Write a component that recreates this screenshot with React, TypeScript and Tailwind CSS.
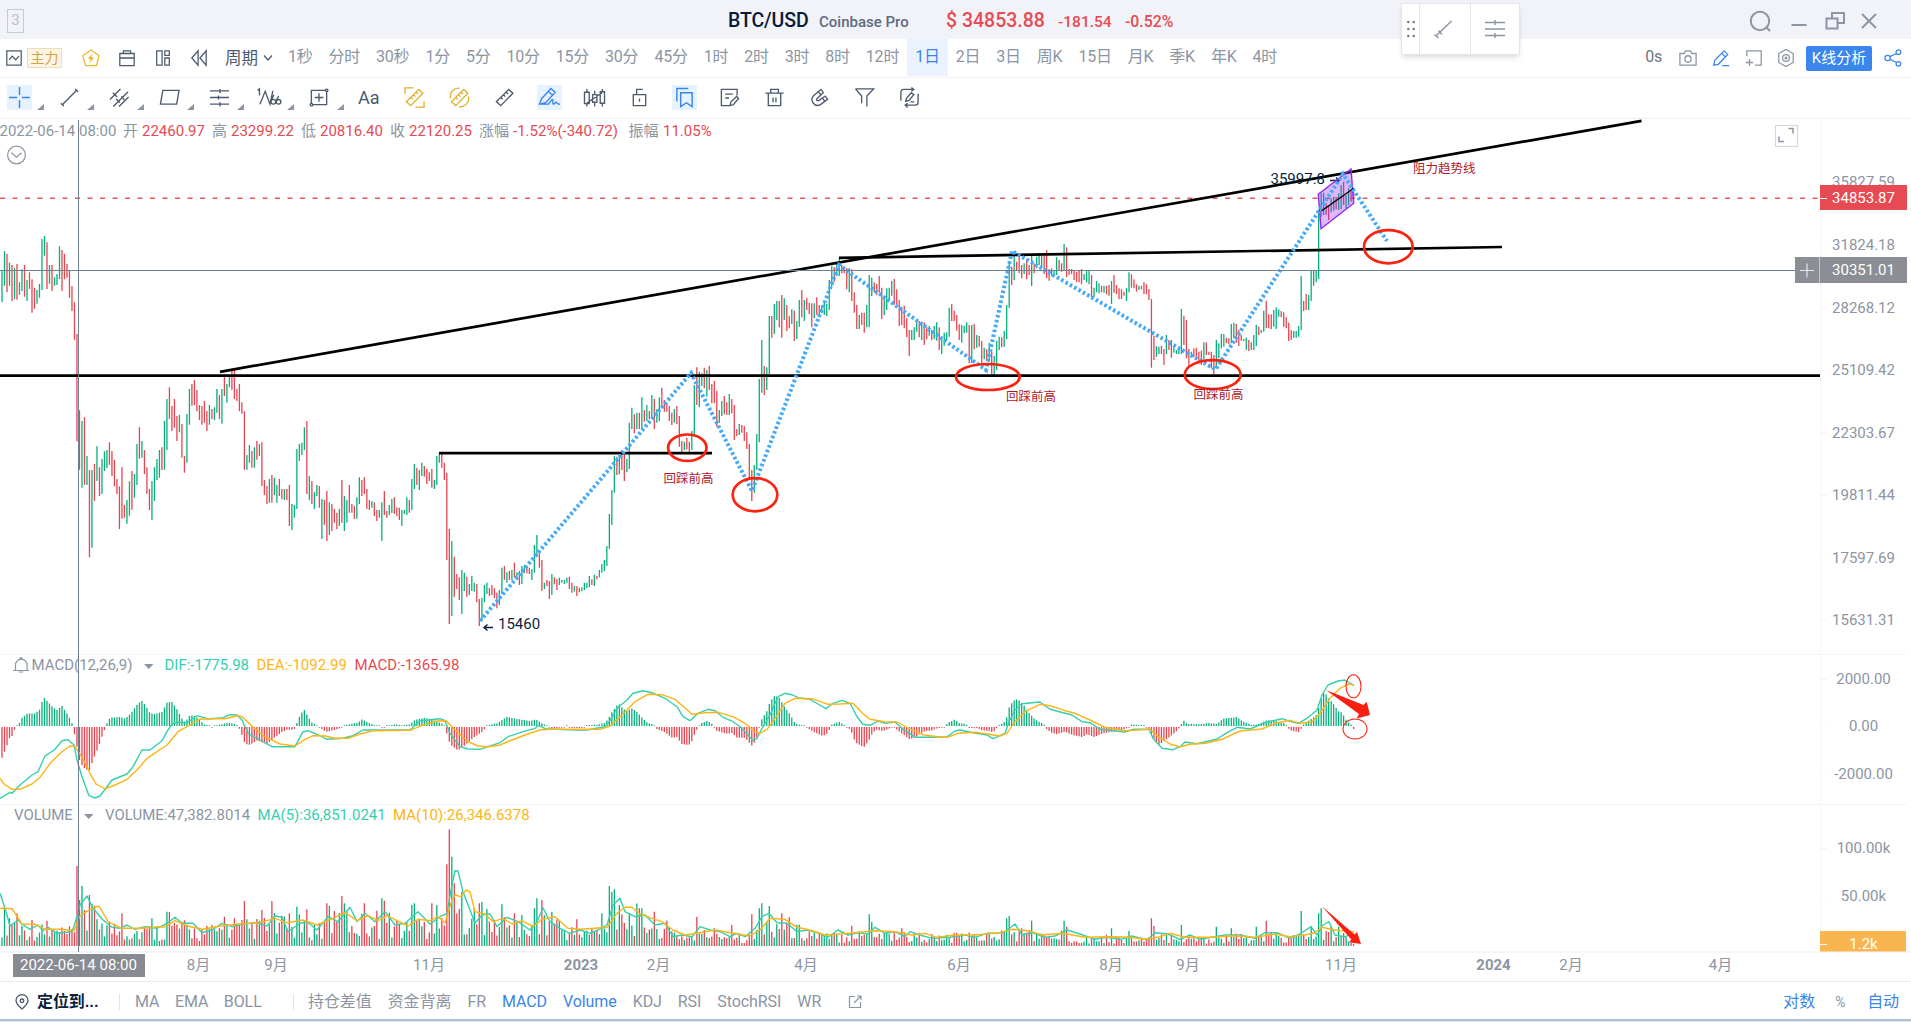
import React from "react";

const FONT = "Roboto, 'Noto Sans CJK SC', sans-serif";
const GREEN = "#06b07b";
const RED = "#e64550";

/* ---------- price data: "high-low" pixel pairs followed by direction ---------- */
const SEG_A =
  "152-247g 94-197g 102-217r 128-197g 135-243r 143-238g 132-239r 187-224g 148-213g 135-230r 180-243g 157-207r 178-278r 203-266r 210-251g 192-233g 57-210g 48-107g 67-207r 135-191g 135-213r 172-197g 162-195g 79-177g 90-213r 101-178r 132-173r 152-233r 198-273r 247-359r 342-664r 571-749r 603-803g 592-794r 708-795g 751-1012r 750-983g 732-843r 679-783g 742-828r 717-822g 694-753g 690-744g 667-735r 693-768r 720-799r 777-822r 799-927r 742-896r 855-893r 840-911g 784-887g 753-869r 762-833g 672-795g 622-716r 663-713g 690-762r 742-822r 807-870r 783-900g 742-843g 717-780g 690-773g 682-750r 603-749g 537-690g 502-597r 558-633r 537-623r 588-663r 585-637g 612-713r 708-758r 582-728g 507-614g 492-557r 480-555r 510-574r 555-600r 558-614r 543-608r 573-633r 555-614g 567-597r 562-600g 507-578g 525-597r 507-611g 462-528r 492-548g 468-502g 453-510r 450-537r 507-543r 492-574r 547-581r 574-749r 705-749g 675-728g 693-743r 682-743g 663-719r 672-708g 667-798r 780-825r 798-852r 777-848g 765-848r 773-825g 795-848g 777-828r 807-838r 807-840g 807-840r 795-918r 852-930g 855-893g 687-867g 672-723g 668-705g 622-690g 603-822r 768-840g 783-852r 817-867g 795-828g 798-863r 837-957g 840-914r 813-963r 847-945g 852-933r 867-908r 878-927r 867-918g 780-908r 828-933g 840-908g 795-878r 852-878r 857-897r 832-896g 772-852g 780-828r 772-822r 807-867r 840-870r 843-863g 847-888r 870-903r 870-893g 847-963g 813-885r 873-893r 855-885g 837-879g 832-882r 862-888r 863-900r 870-918g 870-882g 832-885g 840-878r 777-870g 732-807g 743-795r 750-810g 728-768g 738-770r 747-792r 757-783r 747-803r 780-807g 708-795g 700-728g 702-743r 728-780r 758-1020r 927-1212r 963-1188g 1010-1130r 1062-1107r 1072-1140r 1050-1182g 1058-1113g 1070-1130r 1092-1125g 1068-1113g 1088-1115g 1092-1147r 1137-1218r";
const SEG_B =
  "1073-1140g 1035-1087g 1028-1062g 1044-1068r 1035-1065r 1045-1075r 1058-1105r 1050-1095g 983-1062g 978-1020r 997-1028g 993-1020r 990-1020g 968-1012r 997-1018g 993-1035r 978-1032g 975-1000g 980-1000r 983-1002r 987-1020g 915-998g 885-950g 930-983r 960-1053r 1028-1047g 1020-1038r 1023-1077r 1002-1065g 1012-1033r 1018-1050r 1013-1035g 1020-1028g 1020-1032g 1013-1028g 1010-1047r 1028-1058r 1038-1055g 1038-1068r 1043-1057r 1042-1054g 1028-1050g 1028-1044g 1008-1042g 1018-1035r 1004-1038g 1008-1018r 990-1012g 972-998g 960-993g 918-978g 822-927g 750-855g 648-758g 650-705r 645-703g 630-690r 640-723r 657-697g 548-687g 503-567g 523-580r 518-567g 518-567r 472-570g 510-545r 495-543g 513-537r 465-535g 477-567r 508-548g 472-543g 443-505r 480-515r 490-515r 498-543r 518-555r 507-548g 498-552r 528-620r 603-636r 605-630g 593-628r 605-640r 573-630g 435-585g 382-495r 395-502g 400-438g 383-445r 390-470g 378-450r 432-490r 423-490r 453-560r 510-548g 483-528g 468-523r 487-525r 462-525g 477-520r 495-600r 567-588r 552-585g 555-578r 558-603r 577-627r 612-720r 690-783r 675-758g 582-690g 417-607g 300-458g 378-465r 382-450g 228-402g 228-293r 192-282g 183-240g 183-262r 165-293r 175-240g 195-273r 228-265r 208-252g 212-303r 243-297g 180-260g 150-232r 180-243g 173-210r 188-222r 190-262r 190-235g 172-225r 195-232r 200-220g 185-225g 192-228g 120-210g 78-140g 82-125r 72-108g 55-108g 75-100r 80-100r 85-148r 84-157g 88-183r 157-218r 195-267r 225-267g 218-255r 218-278r 195-262g 105-262g 113-168g 127-157r 132-165r 108-158r 143-237r 172-225g 145-210g 143-180g 123-167g 117-195r 148-192r 180-258r 202-255r 197-265r 235-292r 270-348r 270-300g 262-300g 243-275g 243-292r 247-300g 247-315r 262-298r 258-287g 270-300r 258-297g 247-302g 262-330r 297-342g 278-317g 277-300g 203-290g 192-243r 212-243r 225-272r 253-300r 255-308g 257-280g 247-278g 255-370r 255-368g 252-328r 285-323g 288-320r 303-368r 323-358g 328-360r 308-365g 335-403r 348-408g 303-390g 290-330g";
const SEG_C =
  "562-592r 543-590g 465-567g 335-473g 350-405r 303-390g 335-360r 318-370r 345-385r 340-372g 328-388r 345-375r 317-408g 340-370r 320-355g 310-345g 318-352g 317-372r 300-385r 357-392r 355-378g 360-378g 322-375g 330-362r 340-365r 282-362g 292-382r 357-375r 357-372r 360-390r 365-397r 360-397r 357-403r 372-390g 363-397g 363-403g 375-442r 413-440g 393-427g 400-430g 407-427r 407-428g 407-433r 405-437r 393-462g 375-428r 405-433r 415-448r 418-447r 425-437r 415-453g 367-427g 373-413r 388-415r 403-425r 407-420g 407-418r 397-433r 403-433r 417-450r 447-653r 557-630r 588-620g 590-612g 587-612r 597-645r 555-612g 570-600r 570-623r 592-608g 600-612g 597-612g 477-612g 497-585r 510-625r 597-648r 605-622g 595-622r 593-625r 605-640r 602-645r 577-628g 577-615r 605-615r 605-655r 615-672r 570-655g 580-625g 552-595g 552-590g 563-580r 565-583r 522-580g 518-565g 522-578r 540-588r 555-572r 567-573g 563-600g 570-603r 577-600g 555-600g 525-588g 530-555r 540-550g 482-545g 453-535r 493-535r 493-537r 480-530g 472-537g 478-500g 483-502r 487-530r 502-535r 518-573r 540-570r 543-563g 543-563g 528-560g 378-540g 453-483r 432-480r 435-480g 363-453g 363-407g 363-397g 180-387g 130-200g 128-195g 160-195r 165-210r 145-187g 140-182g 140-178r 130-180g 105-178g 95-165r 135-175g 115-165g 120-155r 125-145r";

type Bar = { x: number; hi: number; lo: number; up: boolean };

function segment(src: string, x0: number, x1: number, y0: number): Bar[] {
  const items = src.split(" ");
  return items.map((s, k) => {
    const [a, b] = s.slice(0, -1).split("-").map(Number);
    return {
      x: x0 + ((x1 - x0) * k) / (items.length - 1),
      hi: y0 + a / 3,
      lo: y0 + b / 3,
      up: s.endsWith("g"),
    };
  });
}

const BARS: Bar[] = [
  ...segment(SEG_A, 2, 479.3, 220),
  ...segment(SEG_B, 481.9, 999.2, 240),
  ...segment(SEG_C, 1001.7, 1353.6, 150),
];

const nums = (s: string) => s.trim().split(/[\s,]+/).map(Number);
function frames(s: string): [number, number][] {
  const n = nums(s);
  const out: [number, number][] = [];
  for (let i = 0; i < n.length; i += 2) out.push([n[i], n[i + 1]]);
  return out;
}
function at(f: [number, number][], x: number) {
  if (x <= f[0][0]) return f[0][1];
  for (let i = 1; i < f.length; i++) {
    if (x <= f[i][0]) {
      const [xa, ya] = f[i - 1];
      const [xb, yb] = f[i];
      return ya + ((yb - ya) * (x - xa)) / (xb - xa);
    }
  }
  return f[f.length - 1][1];
}

const HIST = frames(`0,-115 2,-92 6.5,-60 9,-35 12,-27 14,-10 17,2 19.5,10 22,25 27,37 35,38 40,50 42,72 44.5,84 48,72 53,56 57,48 62,60 66,42 70,22 72,8 74,-15 78,-75 80,-108 84,-122 89,-133 94,-92 99,-55 103,-20 105,-5 106,3 110,25 120,27 125,22 130,35 138,68 142,75 146,60 150,38 155,36 162,42 167,70 172,72 177,50 182,22 185,12 190,32 195,30 199,20 204,5 209,1 213,-1 220,4 228,10 233,8 238,2 240,-8 245,-50 250,-54 257,-40 267,-52 275,-30 282,-15 287,-8 294,-8 297,10 300,32 304,50 308,28 312,10 316,3 321,-4 326,-15 333,-10 341,-3 345,3 358,10 362,20 368,10 375,2 383,-1 388,1 395,5 403,2 410,5 415,18 425,24 436,15 444,5 448,-30 450,-52 458,-70 465,-55 472,-35 482,-15 486,-1 490,4 497,8 502,18 507,27 515,22 530,15 536,20 542,8 547,1 550,-3 558,-3 563,-1 567,1 572,-3 583,-3 588,3 598,4 605,10 609,25 612,42 617,62 619,66 623,52 627,45 632,53 637,42 643,22 648,8 653,5 656,-5 664,-14 672,-32 677,-30 682,-52 689,-54 692,-42 695,-18 698,-2 701,8 707,15 713,5 717,-12 727,-20 732,-18 737,-32 745,-32 752,-56 756,-40 759,-4 762,22 767,45 770,72 775,92 779,85 784,60 790,35 795,8 800,3 806,1 808,-4 813,-14 823,-27 828,-18 831,3 839,12 844,4 847,-2 851,-8 853,-32 857,-50 864,-60 869,-40 873,-15 877,-8 883,-12 890,-4 893,2 896,-6 902,-20 910,-38 917,-28 923,-14 932,-10 938,-3 945,-1 948,10 955,20 959,9 966,6 969,-3 977,-3 982,-10 990,-12 993,-17 997,-3 999,3 1004,10 1007,28 1009,55 1013,75 1017,80 1020,75 1025,58 1028,42 1035,20 1042,8 1045,2 1047,-8 1052,-18 1057,-22 1065,-14 1073,-24 1082,-30 1087,-22 1094,-30 1102,-20 1110,-15 1123,-8 1128,-2 1131,4 1144,3 1148,-3 1152,-25 1158,-55 1165,-40 1173,-22 1178,-8 1181,4 1184,16 1188,6 1200,5 1208,9 1217,6 1223,22 1237,27 1242,15 1252,3 1258,5 1267,18 1275,15 1285,8 1288,-4 1292,-12 1299,-15 1302,-2 1305,10 1312,22 1317,35 1320,70 1323,100 1326,95 1328,85 1333,68 1338,45 1342,40 1347,14 1352,2 1354,-8`);
const DIF = frames(`0,445 10,427 12,430 20,405 32,375 38,365 45,318 55,298 62,272 68,269 74,285 77,330 82,380 89,437 95,444 100,438 112,390 127,372 133,350 142,300 150,300 162,272 167,245 172,222 178,217 187,218 197,197 208,207 223,203 230,194 237,195 242,210 248,250 260,270 272,290 295,290 303,245 308,242 320,257 327,268 343,265 353,257 363,240 373,240 410,240 420,212 440,206 445,212 450,250 460,290 468,297 480,298 500,278 508,260 523,245 535,235 539,226 545,236 575,240 587,240 605,230 610,212 617,175 627,150 633,130 643,122 652,128 665,145 677,170 683,200 690,212 698,190 708,178 715,182 723,202 733,215 742,235 748,255 753,272 757,265 762,235 770,195 778,140 785,130 793,135 798,143 810,148 818,162 826,176 833,160 842,151 850,160 857,200 863,223 870,226 878,213 885,220 895,216 902,235 915,262 935,262 947,260 955,243 960,240 973,248 987,255 993,266 1005,250 1009,215 1015,180 1022,161 1040,156 1050,178 1063,188 1072,195 1082,215 1090,218 1100,238 1125,246 1133,238 1149,238 1153,265 1162,295 1173,299 1180,290 1185,276 1197,281 1217,267 1227,248 1237,232 1250,237 1265,218 1282,206 1288,212 1298,220 1307,205 1317,180 1322,135 1328,105 1338,93 1345,90 1354,107`);
const DEA = frames(`0,385 4,402 12,418 20,418 32,402 40,382 50,340 62,305 70,288 75,290 82,322 90,370 96,402 105,417 115,405 127,388 137,360 147,325 157,305 167,285 178,245 190,225 199,208 212,206 225,206 237,197 242,200 252,228 265,260 280,282 295,288 305,268 313,257 325,258 335,265 348,265 360,252 373,242 410,241 422,226 437,213 446,212 455,240 468,275 478,288 487,291 500,285 512,270 525,255 540,240 550,238 600,238 610,228 622,195 635,155 648,133 662,134 675,148 692,193 705,188 718,187 733,200 745,220 755,245 760,250 767,238 775,205 785,160 795,145 812,146 828,163 840,162 853,160 862,188 870,208 885,215 897,216 912,240 925,256 940,261 948,261 958,250 975,247 987,252 1000,258 1007,250 1015,215 1025,185 1040,163 1050,167 1065,182 1075,190 1090,210 1105,232 1125,242 1150,238 1158,260 1170,282 1180,291 1190,283 1205,280 1222,268 1240,243 1262,237 1275,220 1290,211 1300,220 1312,215 1320,190 1330,145 1340,115 1348,103 1354,104`);
const MA5 = frames(`0,730 5,775 10,828 18,810 22,822 30,838 38,825 43,842 48,832 57,850 72,845 75,820 80,765 87,738 93,775 103,810 112,832 120,835 127,825 135,838 145,830 157,835 167,820 175,802 182,820 193,820 202,848 212,840 222,820 232,830 243,822 257,818 267,828 275,798 282,802 288,845 300,820 307,815 317,840 328,800 338,815 350,772 357,815 365,790 375,815 385,785 395,825 405,820 418,785 430,822 440,800 447,790 451,720 455,662 458,663 463,725 470,780 475,820 482,795 490,792 497,830 507,802 518,815 530,840 537,815 543,773 550,815 560,835 570,850 580,840 590,850 598,840 607,825 613,765 620,745 625,785 635,800 645,795 655,825 665,820 673,860 682,855 692,860 700,830 710,840 720,845 730,860 737,850 745,860 755,835 762,800 769,790 777,818 787,820 797,845 807,840 820,850 828,862 838,840 848,855 858,848 868,852 875,832 885,850 895,845 905,860 910,845 920,855 932,865 950,862 965,855 975,862 987,850 997,850 1005,845 1015,822 1022,855 1032,848 1045,862 1055,858 1067,840 1080,852 1095,868 1107,862 1120,868 1132,858 1147,870 1155,848 1168,852 1180,868 1190,855 1200,868 1212,862 1225,855 1240,855 1255,865 1265,848 1277,848 1290,865 1300,852 1311,830 1317,855 1323,825 1329,815 1335,855 1345,860 1354,850`);
const MA10 = frames(`0,775 12,776 22,822 35,823 45,838 60,838 74,842 80,798 90,778 99,768 108,815 122,835 140,835 165,830 175,812 187,828 203,838 220,828 240,822 260,818 275,805 287,818 303,810 317,825 333,805 345,787 357,812 368,797 378,812 387,797 397,812 408,828 418,808 430,812 438,800 445,818 452,750 455,735 461,740 466,720 470,725 475,785 485,792 493,815 503,805 512,822 522,812 533,830 542,808 555,800 568,835 580,838 595,835 607,832 617,790 625,772 632,772 640,792 652,805 662,815 673,840 685,855 700,848 715,840 733,850 750,858 760,840 770,805 785,808 797,832 810,840 825,855 840,852 855,848 875,842 895,845 912,855 925,850 937,862 955,855 975,855 1000,848 1012,838 1028,842 1042,855 1063,850 1085,862 1110,860 1130,862 1145,868 1160,860 1170,850 1185,862 1210,862 1235,857 1255,862 1275,852 1290,860 1305,855 1315,848 1322,832 1335,840 1354,845`);
const SPIKES = frames(`17,790 32,810 47,812 77,648 79.5,750 82,708 84.5,780 89.5,735 122,790 152,805 168,785 170,786 224,800 234,805 244.5,753 262,780 272,753 289,790 297,770 307,778 327,760 330,768 342,738 345,760 364,760 377,782 382,745 384.5,752 412,765 414.5,760 432,760 437,765 447,643 449.5,538 452,620 454.5,700 462,725 480,760 482,756 502,763 514.5,790 535,775 537,745 542,750 552,785 577,808 602,790 609.5,708 612,725 614.5,718 620,765 623,793 639,775 642,775 654,785 697,800 732,825 752,793 759,775 762,760 769,768 782,790 869,793 872,815 852,828 902,835 1007,805 1009,798 1032,812 1064,812 1067,830 1112,835 1130,843 1151.5,805 1154,828 1181,825 1216,830 1232,835 1257,830 1266.5,812 1301.5,783 1311,828 1319,790 1321.5,775 1326.5,843 1329,846 1334,874 1351.5,878 1354,882`);

const SPIKE_BY_BAR = new Map<number, number>();
SPIKES.forEach(([x, y]) => {
  let best = 0;
  BARS.forEach((b, i) => {
    if (Math.abs(b.x - x) < Math.abs(BARS[best].x - x)) best = i;
  });
  SPIKE_BY_BAR.set(best, y);
});

function volumeTop(i: number, x: number) {
  const spike = SPIKE_BY_BAR.get(i);
  if (spike !== undefined) return 650 + spike / 3;
  const mean = 888 - Math.max(at(MA10, x), 785);
  const r = Math.abs(Math.sin(i * 12.9898) * 43758.5453) % 1;
  return 650 + (888 - mean * (0.25 + r * 1.0)) / 3;
}

const line = (f: [number, number][]) =>
  f.map(([x, y], i) => `${i ? "L" : "M"}${x} ${(650 + y / 3).toFixed(1)}`).join("");

const vbars = (list: { x: number; a: number; b: number }[]) =>
  list.map((b) => `M${b.x.toFixed(2)} ${b.a.toFixed(1)}V${b.b.toFixed(1)}`).join("");

const candlePath = (up: boolean) =>
  vbars(BARS.filter((b) => b.up === up).map((b) => ({ x: b.x, a: b.hi, b: b.lo })));
const volumePath = (up: boolean) =>
  vbars(
    BARS.map((b, i) => ({ x: b.x, a: volumeTop(i, b.x), b: 946, up: b.up })).filter((b) => b.up === up)
  );
const histPath = (up: boolean) =>
  vbars(
    BARS.map((b) => ({ x: b.x, h: at(HIST, b.x) }))
      .filter((b) => b.h >= 0 === up)
      .map((b) =>
        up
          ? { x: b.x, a: 726 - Math.max(b.h / 3, 0.8), b: 726 }
          : { x: b.x, a: 727, b: 727 + Math.max(-b.h / 3, 0.8) }
      )
  );

/* ---------- chart ---------- */
type TProps = { x: number; y: number; c?: string; s?: number; a?: "start" | "middle"; w?: number; children: React.ReactNode };
const T = ({ x, y, c = "#8b95a3", s = 15, a = "start", w = 400, children }: TProps) => (
  <text x={x} y={y + s * 0.355} fill={c} fontSize={s} textAnchor={a} fontWeight={w}>
    {children}
  </text>
);

const PRICE_AXIS: [string, number][] = [
  ["35827.59", 182], ["31824.18", 245], ["28268.12", 307.5], ["25109.42", 370], ["22303.67", 432.5],
  ["19811.44", 495], ["17597.69", 557.5], ["15631.31", 620], ["2000.00", 679], ["0.00", 726],
  ["-2000.00", 774], ["100.00k", 848], ["50.00k", 896],
];
const DATES: [string, number][] = [
  ["7月", 125], ["8月", 198.5], ["9月", 276], ["11月", 429], ["2023", 581], ["2月", 658.5], ["4月", 806], ["6月", 959],
  ["8月", 1111], ["9月", 1188], ["11月", 1341], ["2024", 1493.5], ["2月", 1571], ["4月", 1720.5],
];
const OHLC: [string, number, string, number][] = [
  ["开", 123, "22460.97", 142], ["高", 212, "23299.22", 231], ["低", 301, "20816.40", 320],
  ["收", 390, "22120.25", 409], ["涨幅", 479, "-1.52%(-340.72)", 513], ["振幅", 628.5, "11.05%", 663],
];

const Chart = () => (
  <svg viewBox="0 119 1911 862" className="block h-[862px] w-[1911px]" style={{ fontFamily: FONT }}>
    <g stroke="#f4f5f7" strokeWidth="1">
      <path d="M0 654.5H1907M0 804.5H1907M1820.5 119V951" />
      <path d="M0 952H1911" stroke="#f5f6f8" strokeWidth="2" />
      <path d="M1821 245.5h6M1821 307.5h6M1821 370.5h6M1821 432.5h6M1821 495.5h6M1821 557.5h6M1821 620.5h6M1821 679.5h6M1821 726.5h6M1821 774.5h6M1821 848.5h6M1821 897.5h6" />
    </g>

    {/* candles */}
    <path d={candlePath(true)} stroke={GREEN} strokeWidth="1.3" />
    <path d={candlePath(false)} stroke={RED} strokeWidth="1.3" />

    {/* MACD */}
    <path d={histPath(true)} stroke={GREEN} strokeWidth="1.3" />
    <path d={histPath(false)} stroke={RED} strokeWidth="1.3" />
    <path d={line(DIF)} stroke="#36cfae" strokeWidth="1.4" fill="none" strokeLinejoin="round" />
    <path d={line(DEA)} stroke="#fdb515" strokeWidth="1.4" fill="none" strokeLinejoin="round" />

    {/* volume */}
    <path d={volumePath(true)} stroke={GREEN} strokeWidth="1.3" />
    <path d={volumePath(false)} stroke={RED} strokeWidth="1.3" />
    <path d={line(MA5)} stroke="#36cfae" strokeWidth="1.4" fill="none" strokeLinejoin="round" />
    <path d={line(MA10)} stroke="#fdb515" strokeWidth="1.4" fill="none" strokeLinejoin="round" />

    {/* last price */}
    <path d="M0 198.3H1820" stroke="#ea5560" strokeWidth="1.6" strokeDasharray="5 7.5" />

    {/* drawings */}
    <g stroke="#000" fill="none">
      <path d="M220 371.8L1641.5 120.8" strokeWidth="2.7" />
      <path d="M0 375.7H1820" strokeWidth="2.7" />
      <path d="M839 257.8L1502 247" strokeWidth="2.7" />
      <path d="M439 453.2H712" strokeWidth="2.7" />
    </g>
    <T x={1270.5} y={178.5} c="#0b1f3d">35997.8</T>
    <path d="M1330 180.5h9M1336 177.5l3 3l-3 3" stroke="#0b1f3d" fill="none" strokeWidth="1.3" />
    <path d="M1318.3 194.3L1351 169L1353.7 203.3L1321 228.7Z" fill="#9226f0" fillOpacity="0.32" stroke="#9226f0" strokeWidth="1.4" />
    <path d="M1321.7 210.7L1353.7 188.3" stroke="#000" strokeWidth="1.4" />
    <path
      d="M480 621L691 373L752 491L839 265L986 370L1012 251L1215.5 369.5L1343 174L1387 241"
      fill="none"
      stroke="#43a9fb"
      strokeWidth="4"
      strokeDasharray="2.6 2.4"
    />
    <g stroke="#fb2310" strokeWidth="2.7" fill="none">
      <ellipse cx="687.3" cy="447.7" rx="19.2" ry="13.2" />
      <ellipse cx="755" cy="494.7" rx="22.3" ry="16.6" />
      <ellipse cx="987.8" cy="377" rx="31.8" ry="13" />
      <ellipse cx="1212.7" cy="374.6" rx="28" ry="14.5" />
      <ellipse cx="1388.3" cy="246.7" rx="24.3" ry="16.6" />
      <ellipse cx="1353.5" cy="686.3" rx="7.5" ry="11.5" strokeWidth="1.1" />
      <ellipse cx="1355" cy="729" rx="12" ry="10" strokeWidth="1.1" />
    </g>
    <g fill="#fb1f12">
      <path d="M1326 690L1363.5 705L1366.7 701.7L1370 715L1356.7 718.5L1359 714Z" />
      <path d="M1321.7 906L1354.5 934.5L1357 932L1361 944L1349 942.3L1351.3 939.5Z" />
    </g>
    <T x={663.5} y={478.8} c="#b0172b" s={12.5}>回踩前高</T>
    <T x={1006} y={396.8} c="#b0172b" s={12.5}>回踩前高</T>
    <T x={1193.5} y={395} c="#b0172b" s={12.5}>回踩前高</T>
    <T x={1413} y={168.9} c="#b0172b" s={12.5}>阻力趋势线</T>
    <path d="M493 627.5h-9M487.5 624.5l-3.5 3l3.5 3" stroke="#0b1f3d" fill="none" strokeWidth="1.4" />
    <T x={498} y={624} c="#0b1f3d">15460</T>

    {/* legends */}
    <T x={-0.5} y={131}>2022-06-14 08:00</T>
    {OHLC.map(([k, kx, v, vx]) => (
      <React.Fragment key={k}>
        <T x={kx} y={131}>{k}</T>
        <T x={vx} y={131} c="#e84a53">{v}</T>
      </React.Fragment>
    ))}
    <g fill="none" stroke="#8b95a3" strokeWidth="1.2">
      <circle cx="16.5" cy="155" r="8.9" />
      <path d="M11.5 152.8l5 4.5l5-4.5" />
      <rect x="1775.5" y="125.5" width="22" height="21" stroke="#d5d9df" />
      <path d="M1788.5 128.500h4.500v5M1779 136.500v5h5" strokeWidth="1.5" />
      <path d="M13 670.500h16M15.500 670.500v-5.500a5.800 5.800 0 0 1 11.600 0v5.500M19.300 658.500l1.700-.8l1.700.8M18.800 672h4.400" />
    </g>
    <T x={31.5} y={665}>MACD(12,26,9)</T>
    <path d="M144 664h9.500l-4.700 5z" fill="#8b95a3" />
    <T x={164.5} y={665} c="#36cfae">DIF:-1775.98</T>
    <T x={256.5} y={665} c="#fdb515">DEA:-1092.99</T>
    <T x={354.5} y={665} c="#e84a53">MACD:-1365.98</T>
    <T x={14} y={815}>VOLUME</T>
    <path d="M84 814h9.500l-4.700 5z" fill="#8b95a3" />
    <T x={105} y={815}>VOLUME:47,382.8014</T>
    <T x={257.5} y={815} c="#36cfae">MA(5):36,851.0241</T>
    <T x={393} y={815} c="#fdb515">MA(10):26,346.6378</T>

    {/* axes */}
    {PRICE_AXIS.map(([label, y]) => (
      <T key={label} x={1863.5} y={y} a="middle">{label}</T>
    ))}
    {DATES.map(([label, x]) => (
      <T key={label + x} x={x} y={965} a="middle" w={label.length === 4 ? 700 : 400}>{label}</T>
    ))}

    {/* crosshair */}
    <path d="M78.5 120V952M0 270.5H1795" stroke="#71808f" strokeWidth="1" />
    <rect x="1795" y="257" width="24.5" height="26" fill="#8b8e94" />
    <path d="M1800 270.5h14M1807 263.5v14" stroke="#e6e7ea" strokeWidth="1.2" />
    <rect x="1820" y="257" width="87" height="26" fill="#8b8e94" />
    <T x={1863.5} y={270} a="middle" c="#fff">30351.01</T>
    <rect x="1820" y="185" width="87" height="25" fill="#e84a53" />
    <path d="M1820 198.5h7" stroke="#fff" />
    <T x={1863.5} y={197.5} a="middle" c="#fff">34853.87</T>
    <rect x="1820" y="931" width="86" height="20.5" fill="#f9b650" />
    <path d="M1820 944.5h7" stroke="#fff" />
    <T x={1863.5} y={944} a="middle" c="#fff">1.2k</T>
    <rect x="13" y="954" width="132" height="23" fill="#82858c" fillOpacity="0.95" />
    <T x={20} y={965} c="#fff">2022-06-14 08:00</T>
  </svg>
);

/* ---------- icons ---------- */
const Ic = ({ children, className = "h-5 w-5" }: { children: React.ReactNode; className?: string }) => (
  <svg viewBox="0 0 20 20" className={`${className} shrink-0`} fill="none" stroke="currentColor" strokeWidth="1.4">
    {children}
  </svg>
);
const Ruler = () => (
  <path d="M1.5 14.5L14.5 1.5L18.8 5.5L6 18.500zM6.200 10l1.900 1.900M9 7.200l1.900 1.900M11.800 4.400l1.900 1.900" />
);

const TOOLS_A: React.ReactNode[] = [
  <path key="a" d="M10 -1v8.500M10 12.500V21M-1 10h8.500M12.500 10H21" strokeWidth="1.5" />,
  <g key="b"><path d="M2.500 17.500L17.500 2.500" /><path d="M1 16l3 3M16 1l3 3" /></g>,
  <path key="c" d="M0 12L11 1M3.500 19.500L19 4M9.500 19.500L19.500 9.500M3 5l4.500 4.500M6.500 11.500l4 4M12 8.500l3 4" />,
  <path key="d" d="M3 2.500h17l-2.500 14.500h-17z" />,
  <path key="e" d="M0 3h20M0 10h20M0 17h20M10.500 1v4.500M9 8v4M10.500 15v4.500" />,
  <g key="f"><path d="M-2.500 2.500L-0.500 1V8M0 17L5.500 3.500L10.500 17L13.500 3M14.500 7L11.800 13.500M19.500 8.500l-2.500 5" /><circle cx="14" cy="14.500" r="2.500" /><circle cx="19.500" cy="14.500" r="2.400" /></g>,
  <g key="g"><path d="M1.500 2.500h16v15h-16zM9.500 5.500v9M5 10h9" /><circle cx="17.500" cy="2.500" r="1.300" fill="white" /><circle cx="1.500" cy="17.500" r="1.300" fill="white" /></g>,
];

type Tool = { node: React.ReactNode; tone?: "gold" | "blue" };
const TOOLS_B: Tool[] = [
  { node: <g><Ruler /><path d="M0 6v-6h9M20 14v6h-9" /></g>, tone: "gold" },
  { node: <g><Ruler /><path d="M0.500 11C-0.500 4 5 -0.500 10 0.300M19.500 9c1 6-4 11.500-10 10.800" /></g>, tone: "gold" },
  { node: <Ruler /> },
  { node: <path d="M-0.500 17L1.500 11.500L11.500 0.500l4.500 4L6 15.500zM8.500 3.500l4.500 4M-0.500 17h9.500c3-5 5-6.500 4.500-3s1 3.500 2.500 1.500s1.500 2 5 1.500" />, tone: "blue" },
  { node: <path d="M-0.500 4.500h5v12h-5zM2 1V4.500M2 16.500v3M8 7h4.500v8H8zM10.200 3v4M10.200 15v4.500M16 4h4.500v12H16zM18.200 1V4M18.200 16v3.500M1 16.500L18 5" /> },
  { node: <path d="M3.500 7h13v11.500h-13zM7 7V1.500h6.500M10 11v3.500" /> },
  { node: <path d="M6 5h12V19.500l-6-4l-6 4zM2 14V0.500h12" strokeWidth="1.5" />, tone: "blue" },
  { node: <path d="M18 8V1.500H1.500v17h9M5.500 6.500h8M5.500 10.500h4M10.500 18.500l1-4l6-5.500l2 2l-5.500 6.500z" /> },
  { node: <path d="M0.500 5.500h19M3.500 5.500V18.500h13v-13M6 5v-3.500h8V5M8.500 10v5M11.500 10v5" /> },
  { node: <path d="M11.500 1.500L4 8C-1 13 5 20.500 11 17.500L18.500 12L16 8.500L9.500 13C7.500 14 6 12.500 7.500 11L14 5zM8.800 4l2.700 3.300M13 10.500l2.500 3.500" /> },
  { node: <path d="M0.500 1h19L12.500 8.500v11M0.500 1l6.500 7.500V16" /> },
  { node: <path d="M1 13.500V4.500c0-2 1-3 3-3H14M12-.5l2.500 2L12 3.500M19 6v9c0 2-1 3-3 3H6M8 16l-2.500 2L8 20.500M6 14l1-3.500L12 5l2.500 2l-5 6zM11 14.500h4" /> },
];

const PERIODS = ["1秒", "分时", "30秒", "1分", "5分", "10分", "15分", "30分", "45分", "1时", "2时", "3时", "8时", "12时", "1日", "2日", "3日", "周K", "15日", "月K", "季K", "年K", "4时"];
const INDICATORS = ["持仓差值", "资金背离", "FR", "MACD", "Volume", "KDJ", "RSI", "StochRSI", "WR"];

const TitleBar = () => (
  <header className="flex h-[39px] shrink-0 items-center bg-[#f2f3f8] pt-0.5">
    <div className="ml-[7px] flex h-6 w-[17px] items-center justify-center border border-[#c6cbd3] text-[15px] text-[#b8bec8]">3</div>
    <div className="ml-[704px] flex shrink-0 items-baseline whitespace-nowrap font-medium text-[#e84a53]">
      <span className="w-[91px] shrink-0 text-[19.5px] tracking-[-0.1px] text-[#081a38]">BTC/USD</span>
      <span className="w-[127px] shrink-0 text-[15px] text-[#5d6b80]">Coinbase Pro</span>
      <span className="w-28 shrink-0 text-[19.5px]">$ 34853.88</span>
      <span className="w-[67px] shrink-0 text-[15.5px]">-181.54</span>
      <span className="text-[15.8px]">-0.52%</span>
    </div>
    <div className="ml-auto mr-[34px] flex items-center text-[#8b95a3]">
      <svg viewBox="0 0 22 22" className="h-[22px] w-[22px]" fill="none" stroke="currentColor" strokeWidth="2">
        <circle cx="11" cy="11" r="9.200" /><path d="M17 17l4 4" />
      </svg>
      <svg viewBox="0 0 16 20" className="ml-5 h-5 w-4" stroke="currentColor" strokeWidth="2"><path d="M0.500 14h15" /></svg>
      <svg viewBox="0 0 20 20" className="ml-[18px] h-5 w-5" fill="none" stroke="currentColor" strokeWidth="2">
        <path d="M1.500 7.500h11v10h-11zM7 7V2h12v10h-6" />
      </svg>
      <svg viewBox="0 0 16 16" className="ml-4 h-4 w-4" stroke="currentColor" strokeWidth="2"><path d="M1 1l14 14M15 1L1 15" /></svg>
    </div>
  </header>
);

const PeriodBar = () => (
  <div className="flex h-[39px] shrink-0 items-center border-b border-[#eef0f3] pl-[5px] text-[#4c5a6e]">
    <Ic className="h-[18px] w-[18px]"><path d="M2 2h16v16H2zM4.500 12l3.500-4l4 4l3.500-4" /></Ic>
    <span className="ml-1 flex h-5 w-[35px] items-center justify-center border border-[#efdcb4] bg-[#fcf5e6] text-[14px] text-[#d6a243]">主力</span>
    <Ic className="ml-5 h-[18px] w-[18px] text-[#e8bb2c]">
      <path d="M10 1L19 7.500L16 18.500H4L1 7.500z" strokeLinejoin="round" /><path d="M11.500 5L6.500 11h3l-1 4.500l5-6h-3z" fill="currentColor" stroke="none" />
    </Ic>
    <Ic className="ml-[18px] h-[18px] w-[18px]"><path d="M2 5h16v13.500H2zM2 10h16M6 5V2h8v3" /></Ic>
    <Ic className="ml-[18px] h-[18px] w-[18px]"><path d="M3 2h6v16H3zM12 2h5v5h-5zM12 10h5v8h-5z" /></Ic>
    <Ic className="ml-[18px] h-[18px] w-[18px]"><path d="M9 2v16L2 10zM18 2v16l-7-8z" /></Ic>
    <span className="ml-[17px] pt-0.5 text-[16.500px]">周期</span>
    <svg viewBox="0 0 10 8" className="ml-[5px] h-2 w-[10px]" fill="none" stroke="currentColor" strokeWidth="1.3"><path d="M1 1.500l4 4.500l4-4.500" /></svg>
    <nav className="ml-[7px] flex h-full text-base tracking-[-0.23px] text-[#8b95a3]">
      {PERIODS.map((p) => (
        <span key={p} className={p === "1日" ? "flex h-[37px] items-center bg-[#e9f2fd] px-2 pb-0.5 text-[#3b85ea]" : "flex h-[37px] items-center px-2 pb-0.5"}>
          {p}
        </span>
      ))}
    </nav>
    <div className="ml-auto flex items-center pr-[9px] text-[#8b95a3]">
      <span className="mr-[17px] pb-0.5 text-base tracking-[-0.3px] text-[#6b7787]">0s</span>
      <Ic className="mr-[15px] h-[18px] w-[18px]"><path d="M1 5h4.500l2-3h5l2 3H19v13H1z" /><circle cx="10" cy="11" r="3.500" /></Ic>
      <Ic className="mr-[15px] h-[18px] w-[18px] text-[#3b85ea]"><path d="M2 18l1-5.500L13.500 2l4 4L7 17zM11 5l3.500 3.500M11 18.500h8" /></Ic>
      <Ic className="mr-[14px] h-[18px] w-[18px]"><path d="M2 8V2h16v16h-7M5 11v8M1 15h8" /></Ic>
      <Ic className="mr-[11px] h-[18px] w-[18px]"><path d="M10 0.500l8 4.500v10l-8 4.500l-8-4.500V5z" /><circle cx="10" cy="10" r="3.800" /><circle cx="10" cy="10" r="1" /></Ic>
      <span className="mr-3 flex h-[25px] w-[66px] items-center justify-center rounded-[2px] bg-[#3a86ec] text-[15px] text-white">K线分析</span>
      <Ic className="h-[18px] w-[18px] text-[#3b85ea]"><circle cx="4" cy="10" r="3" /><circle cx="16" cy="3.500" r="2.600" /><circle cx="16" cy="16.500" r="2.600" /><path d="M6.500 8.500L14 5M6.500 11.500L14 15" /></Ic>
    </div>
  </div>
);

const DrawBar = () => (
  <div className="flex h-[41px] shrink-0 items-center border-b border-[#eef0f3] pb-px pl-[7px] text-[#4c5a6e]">
    {TOOLS_A.map((node, i) => (
      <div key={i} className="flex h-[25px] w-[50px] items-end">
        <span className={i === 0 ? "flex h-[25px] w-[25px] items-center justify-center bg-[#e6f3fe] text-[#3b85ea]" : "flex h-[25px] w-[25px] items-center justify-center"}>
          <svg viewBox="-1 -1 22 22" className="h-[21px] w-[21px] overflow-visible" fill="none" stroke="currentColor" strokeWidth="1.4">{node}</svg>
        </span>
        <svg viewBox="0 0 7 6" className="ml-[5px] h-[6px] w-[7px]"><path d="M7 0v6H0z" fill="#8b95a3" /></svg>
      </div>
    ))}
    <span className="w-[45px] pl-px text-[18px]">Aa</span>
    {TOOLS_B.map(({ node, tone }, i) => (
      <div key={i} className="flex w-[45px]">
        <span
          className={
            tone === "blue"
              ? "flex h-[25px] w-[25px] items-center justify-center bg-[#e6f3fe] text-[#3b85ea]"
              : tone === "gold"
              ? "flex h-[25px] w-[25px] items-center justify-center text-[#e0b02e]"
              : "flex h-[25px] w-[25px] items-center justify-center"
          }
        >
          <svg viewBox="-1 -1 22 22" className="h-[21px] w-[21px] overflow-visible" fill="none" stroke="currentColor" strokeWidth="1.4">{node}</svg>
        </span>
      </div>
    ))}
  </div>
);

const Palette = () => (
  <div className="absolute left-[1401px] top-[3px] flex h-[52px] w-[119px] border border-[#e4e6ea] bg-white text-[#8b95a3] shadow-md">
    <div className="flex w-[18px] items-center justify-center border-r border-[#e4e6ea]">
      <svg viewBox="0 0 8 18" className="h-[18px] w-2" fill="#6b7787">
        {[2, 9, 16].map((y) => (
          <g key={y}><circle cx="1.300" cy={y} r="1.200" /><circle cx="6.700" cy={y} r="1.200" /></g>
        ))}
      </svg>
    </div>
    <div className="flex w-[51px] items-center justify-center border-r border-[#e4e6ea] pr-1">
      <Ic><path d="M2.500 17.500L18.500 2M1.500 15.500l4 3.500M5.500 11.500l3.500 4" /></Ic>
    </div>
    <div className="flex flex-1 items-center justify-center">
      <Ic><path d="M0 3.500h20M0 10h20M0 16.500h20M10 1v5M10 14v5" /></Ic>
    </div>
  </div>
);

const BottomBar = () => (
  <footer className="flex h-[38px] shrink-0 items-center whitespace-nowrap border-t border-[#e9ebef] pl-[15px] pt-0.5 text-base tracking-[-0.08px] text-[#8b95a3]">
    <svg viewBox="0 0 14 16" className="h-4 w-[14px] text-[#4c5a6e]" fill="none" stroke="currentColor" strokeWidth="1.3">
      <path d="M7 15C3 11.500 1 9 1 6.500a6 5.800 0 0 1 12 0C13 9 11 11.500 7 15z" /><circle cx="7" cy="6.800" r="1.800" />
    </svg>
    <span className="ml-2 w-[62px] font-bold text-[#0b1f3d]">定位到...</span>
    <span className="ml-5 h-4 w-px bg-[#dfe3e8]" />
    <div className="ml-[15px] flex w-[158px] gap-[15.5px]"><span>MA</span><span>EMA</span><span>BOLL</span></div>
    <span className="h-4 w-px bg-[#dfe3e8]" />
    <div className="ml-[14px] flex gap-4">
      {INDICATORS.map((n) => (
        <span key={n} className={n === "MACD" || n === "Volume" ? "text-[#3b85ea]" : ""}>{n}</span>
      ))}
    </div>
    <svg viewBox="0 0 14 14" className="ml-[27px] h-[14px] w-[14px]" fill="none" stroke="currentColor" strokeWidth="1.2">
      <path d="M7 1.500H1.500v11h11V7M6 8l6.500-6.500M9 1h4v4" />
    </svg>
    <div className="ml-auto flex items-center pr-3 text-[#3b85ea]">
      <span>对数</span><span className="ml-5 w-3 text-sm text-[#8b95a3]">%</span><span className="ml-5">自动</span>
    </div>
  </footer>
);

export default function App() {
  return (
    <div className="relative flex h-[1022px] w-[1911px] flex-col overflow-hidden bg-white" style={{ fontFamily: FONT }}>
      <TitleBar />
      <PeriodBar />
      <DrawBar />
      <main className="h-[862px] w-[1911px] shrink-0">
        <Chart />
      </main>
      <BottomBar />
      <div className="h-[2px] shrink-0 bg-[#b4bfd0]" />
      <div className="h-px shrink-0 bg-[#e3e9f2]" />
      <Palette />
    </div>
  );
}
